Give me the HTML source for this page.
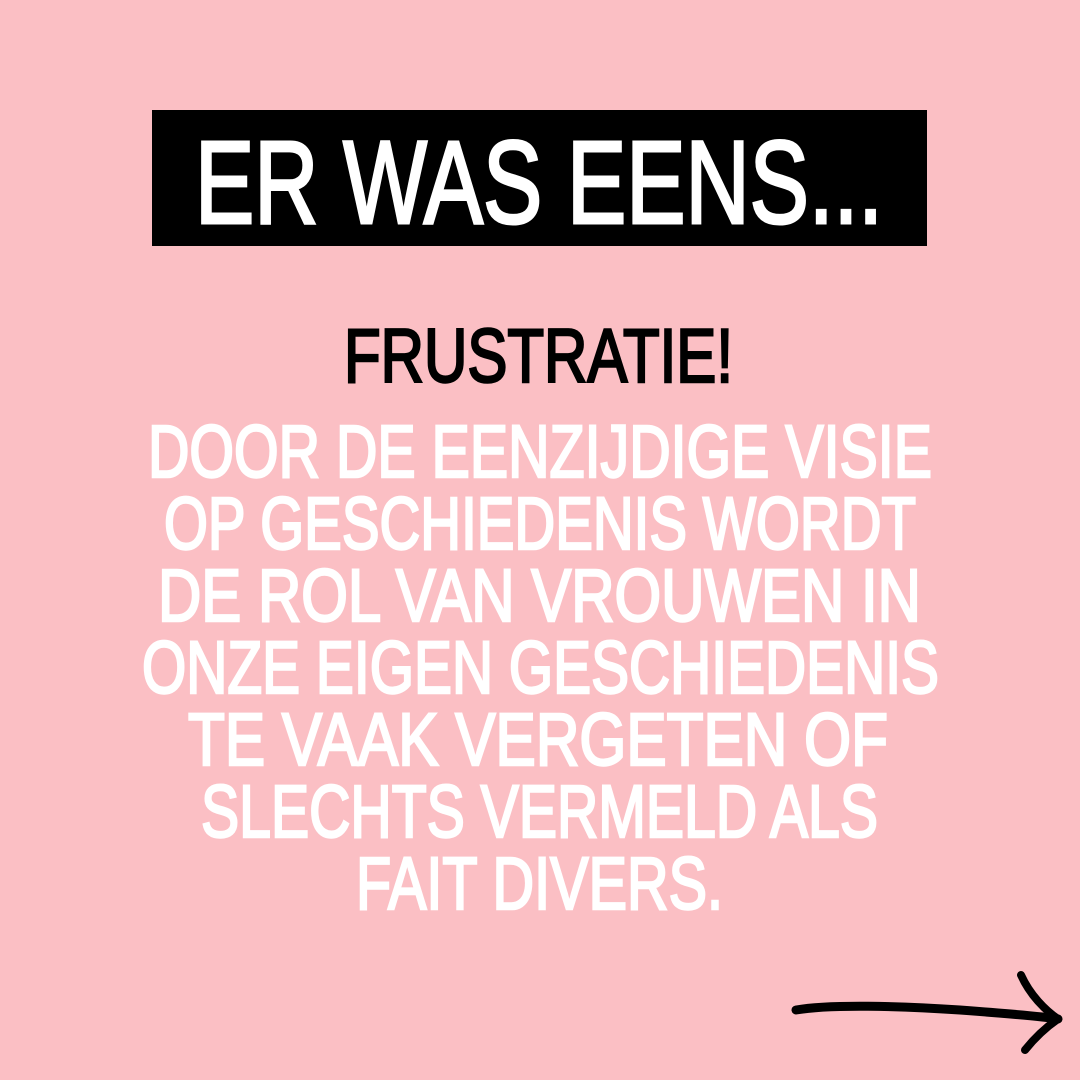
<!DOCTYPE html>
<html><head><meta charset="utf-8"><style>
html,body{margin:0;padding:0;background:#fbbfc4;}
svg{display:block}
</style></head><body>
<svg width="1080" height="1080" viewBox="0 0 1080 1080" xmlns="http://www.w3.org/2000/svg">
<rect width="1080" height="1080" fill="#fbbfc4"/>
<rect x="152" y="110" width="775" height="136" fill="#000"/>
<g font-family="Liberation Sans, sans-serif">
<text x="195" y="223" font-size="118" fill="#fff" stroke="#fff" stroke-width="3" textLength="688" lengthAdjust="spacingAndGlyphs">ER WAS EENS...</text>
<text x="344" y="382" font-size="76" fill="#000" stroke="#000" stroke-width="2.5" textLength="389" lengthAdjust="spacingAndGlyphs">FRUSTRATIE!</text>
<g fill="#fff" stroke="#fff" stroke-width="2.5" font-size="74">
<text x="148" y="477" textLength="784" lengthAdjust="spacingAndGlyphs">DOOR DE EENZIJDIGE VISIE</text>
<text x="164" y="549" textLength="752" lengthAdjust="spacingAndGlyphs">OP GESCHIEDENIS WORDT</text>
<text x="158" y="621" textLength="763" lengthAdjust="spacingAndGlyphs">DE ROL VAN VROUWEN IN</text>
<text x="142" y="693" textLength="797" lengthAdjust="spacingAndGlyphs">ONZE EIGEN GESCHIEDENIS</text>
<text x="188" y="765" textLength="700" lengthAdjust="spacingAndGlyphs">TE VAAK VERGETEN OF</text>
<text x="201" y="837" textLength="677" lengthAdjust="spacingAndGlyphs">SLECHTS VERMELD ALS</text>
<text x="356" y="909" textLength="367" lengthAdjust="spacingAndGlyphs">FAIT DIVERS.</text>
</g>
</g>
<g fill="none" stroke="#000" stroke-linecap="round" stroke-linejoin="round">
<path d="M796 1010 C830 1004 900 1006 960 1010 C1000 1013 1040 1016 1058 1019" stroke-width="9"/>
<path d="M1021 975 C1030 995 1045 1010 1058 1019 C1045 1028 1033 1040 1025 1050" stroke-width="8"/>
</g>
</svg>
</body></html>
